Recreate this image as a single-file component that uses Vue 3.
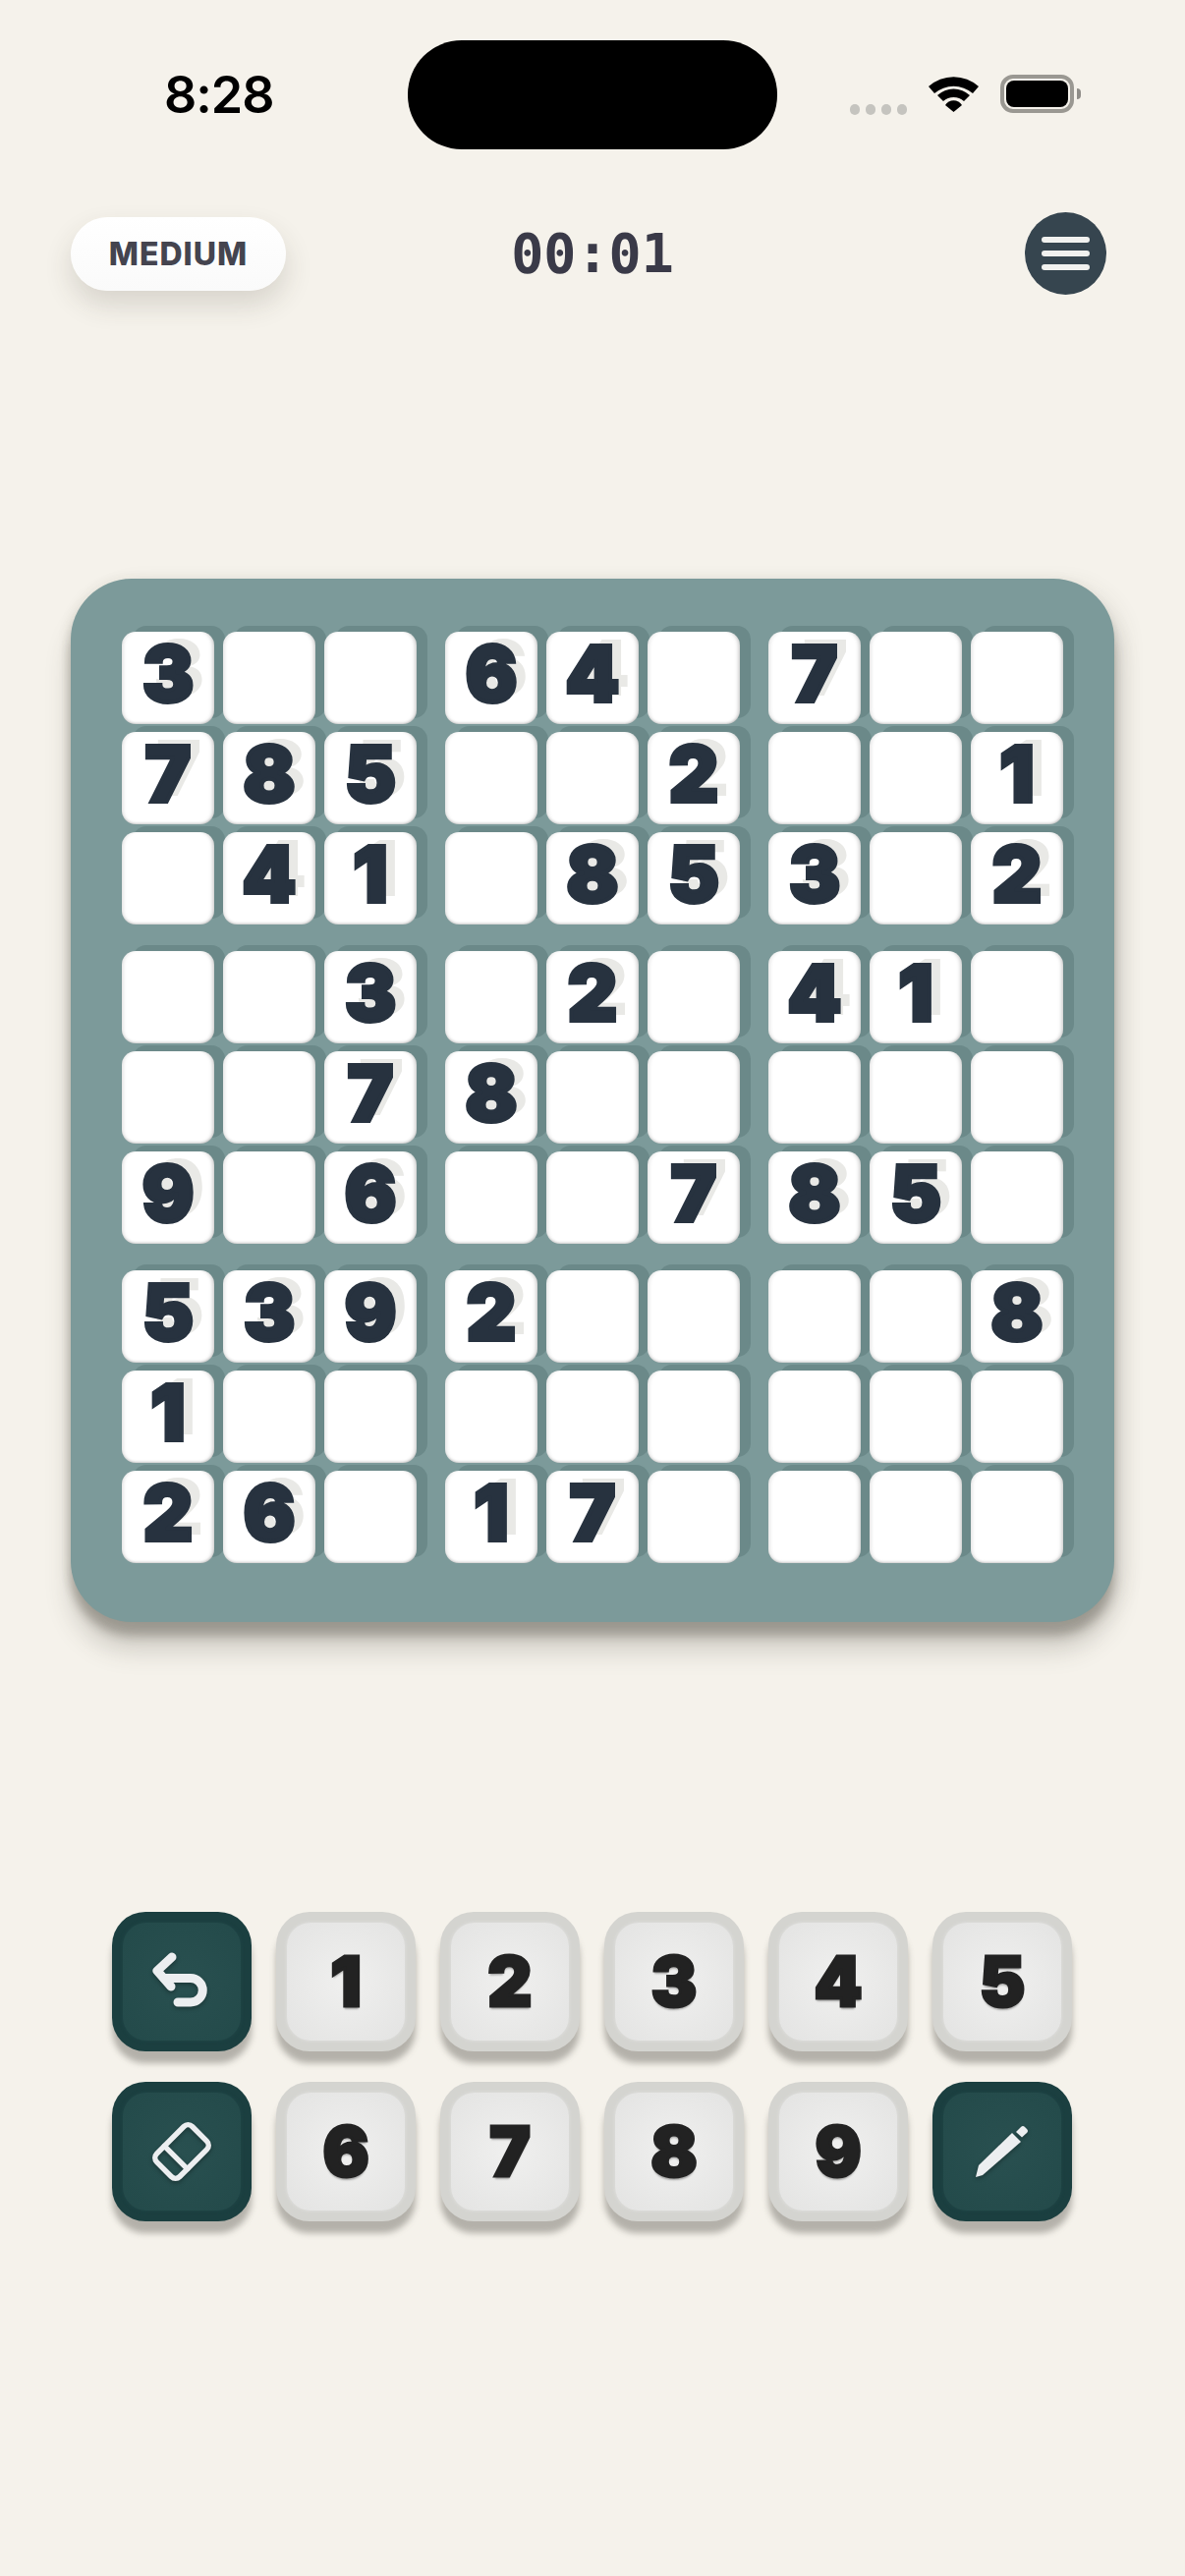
<script setup>
const board = [
  '3..64.7..', '785..2..1', '.41.853.2',
  '..3.2.41.', '..78.....', '9.6..785.',
  '5392....8', '1........', '26.17....'
]
const boxes = [0, 3, 6].flatMap(r => [0, 3, 6].map(c => {
  const cells = []
  for (let i = r; i < r + 3; i++) for (let j = c; j < c + 3; j++) cells.push(board[i][j] === '.' ? '' : board[i][j])
  return cells
}))
const row1 = ['1', '2', '3', '4', '5']
const row2 = ['6', '7', '8', '9']
</script>

<template>
  <div class="screen">
    <div class="status">
      <span class="clock">8:28</span>
      <div class="island"></div>
      <div class="indicators">
        <div class="dots"><i></i><i></i><i></i><i></i></div>
        <svg class="wifi" width="51" height="38" viewBox="0 0 51 38" fill="#000">
          <path d="M0 12 A38 38 0 0 1 51 12 L45 19 A30 30 0 0 0 6 19Z"/>
          <path d="M9 21 A24 24 0 0 1 42 21 L36 27 A16 16 0 0 0 15 27Z"/>
          <path d="M17 31 A10 10 0 0 1 34 31 L25.5 38Z"/>
        </svg>
        <div class="battery"><div class="charge"></div><div class="nub"></div></div>
      </div>
    </div>

    <header class="top">
      <div class="pill">MEDIUM</div>
      <div class="timer">00:01</div>
      <button class="menu"><i></i><i></i><i></i></button>
    </header>

    <section class="board">
      <div class="box" v-for="(box, b) in boxes" :key="b">
        <div class="cell" v-for="(v, i) in box" :key="i">{{ v }}</div>
      </div>
    </section>

    <section class="pad">
      <button class="key dark"><span class="face">
        <svg width="60" height="60" viewBox="0 0 60 60" fill="none" stroke="#eceef0" stroke-width="9" stroke-linecap="round" stroke-linejoin="round">
          <path d="M20 5 L5 19 L19 35"/>
          <path d="M12 26.5 H39 A12.25 12.25 0 0 1 39 51 H26"/>
        </svg>
      </span></button>
      <button class="key" v-for="n in row1" :key="n"><span class="face">{{ n }}</span></button>
      <button class="key dark"><span class="face">
        <svg width="66" height="66" viewBox="0 0 66 66" fill="none" stroke="#eceef0" stroke-width="5.5" stroke-linejoin="round" stroke-linecap="round">
          <g transform="rotate(-45 33 33)">
            <rect x="7.5" y="16.5" width="51" height="33" rx="6"/>
            <path d="M24.5 16.5 V49.5"/>
          </g>
        </svg>
      </span></button>
      <button class="key" v-for="n in row2" :key="n"><span class="face">{{ n }}</span></button>
      <button class="key dark"><span class="face">
        <svg width="54" height="54" viewBox="0 0 54 54" fill="#eceef0">
          <path d="M0 53 L3 41 L37 8 L46 17 L7 51 Z"/>
          <path d="M41 7 L46 2 Q48 0 50 2 L52 4 Q54 6 52 8 L47 12.5 Z"/>
        </svg>
      </span></button>
    </section>
  </div>
</template>

<style scoped>
.screen {
  width: 1206px;
  height: 2622px;
  background: #f5f2eb;
  overflow: hidden;
  display: flex;
  flex-direction: column;
  font-family: Inter, "Liberation Sans", sans-serif;
}
.status {
  height: 111px;
  margin-top: 41px;
  padding: 0 106px 0 167px;
  display: flex;
  align-items: center;
}
.clock {
  width: 248px;
  font-size: 52px;
  font-weight: 600;
  color: #000;
  line-height: 1;
  letter-spacing: -1px;
}
.island {
  width: 376px;
  height: 111px;
  border-radius: 55px;
  background: #000;
}
.indicators {
  margin-left: 74px;
  display: flex;
  align-items: center;
}
.dots { display: flex; gap: 6px; margin-top: 29px; }
.dots i { width: 10px; height: 11px; border-radius: 5px; background: #c5c4bf; }
.wifi { margin-left: 22px; margin-top: -3px; }
.battery {
  position: relative;
  margin-left: 22px;
  width: 75px;
  height: 39px;
  margin-top: -3px;
  box-sizing: border-box;
  border: 4px solid #9a9892;
  border-radius: 13px;
  padding: 2px;
}
.charge { width: 100%; height: 100%; background: #000; border-radius: 8px; }
.nub {
  position: absolute;
  right: -11px;
  top: 10px;
  width: 4px;
  height: 11px;
  border-radius: 0 5px 5px 0;
  background: #8f8d88;
}
.top {
  margin-top: 64px;
  padding: 0 72px;
  height: 84px;
  display: grid;
  grid-template-columns: 1fr auto 1fr;
  align-items: center;
}
.pill {
  width: 219px;
  height: 75px;
  border-radius: 38px;
  background: linear-gradient(#fff, #fafafa);
  color: #44444f;
  font-weight: 800;
  font-size: 32px;
  letter-spacing: 1px;
  display: flex;
  align-items: center;
  justify-content: center;
  box-shadow: 0 14px 28px rgba(60, 55, 45, 0.16);
}
.timer {
  font-family: "DejaVu Sans Mono", monospace;
  font-weight: 700;
  font-size: 55px;
  line-height: 1;
  color: #3a3a48;
}
.menu {
  justify-self: end;
  margin-right: 8px;
  width: 83px;
  height: 84px;
  padding: 0;
  border: 0;
  border-radius: 50%;
  background: #36454f;
  display: flex;
  flex-direction: column;
  align-items: center;
  justify-content: center;
  gap: 8px;
}
.menu i { width: 49px; height: 6px; border-radius: 3px; background: #f1f1ef; }
.board {
  margin-top: 289px;
  margin-left: 72px;
  width: 1062px;
  height: 1062px;
  box-sizing: border-box;
  padding: 54px 52px 60px;
  border-radius: 62px;
  background: #7c9a9a;
  box-shadow: 0 14px 10px rgba(70, 65, 55, 0.3), 0 28px 26px rgba(70, 65, 55, 0.22), 10px 6px 22px rgba(70, 65, 55, 0.1), -4px 0 12px rgba(70, 65, 55, 0.06);
  display: grid;
  grid-template-columns: repeat(3, 300px);
  grid-template-rows: repeat(3, 298px);
  gap: 27px 29px;
}
.box {
  display: grid;
  grid-template-columns: repeat(3, 94px);
  grid-template-rows: repeat(3, 94px);
  gap: 8px 9px;
}
.cell {
  border-radius: 14px;
  background: #fff;
  color: #27323f;
  font-size: 78px;
  font-weight: 900;
  line-height: 1;
  -webkit-text-stroke: 4px #27323f;
  display: flex;
  align-items: center;
  justify-content: center;
  text-shadow: 11px -6px 0 #e9e9e6;
  box-shadow: 11px -6px 0 #6b8989, inset 4px 0 4px -3px rgba(0, 0, 0, 0.14), inset -4px 0 4px -3px rgba(0, 0, 0, 0.26), inset 0 -4px 3px -3px rgba(0, 0, 0, 0.2);
  padding-bottom: 8px;
  box-sizing: border-box;
}
.pad {
  margin-top: 295px;
  margin-left: 114px;
  display: grid;
  grid-template-columns: repeat(6, 142px);
  grid-template-rows: repeat(2, 142px);
  gap: 31px 25px;
}
.key {
  padding: 11px;
  border: 0;
  border-radius: 34px;
  background: #d4d4d0;
  box-shadow: 0 12px 6px rgba(90, 88, 80, 0.42);
  display: block;
}
.face {
  display: flex;
  width: 100%;
  height: 100%;
  border-radius: 24px;
  align-items: center;
  justify-content: center;
  background: radial-gradient(circle at 50% 50%, #f0f0ef 0%, #e3e3e2 100%);
  box-shadow: 0 0 3px 1px #dcdcda;
  font-family: Inter, "Liberation Sans", sans-serif;
  font-size: 70px;
  font-weight: 900;
  color: #222;
  -webkit-text-stroke: 3px #222;
  text-shadow: 0 3px 2px rgba(0, 0, 0, 0.3);
  padding-bottom: 2px;
  box-sizing: border-box;
}
.dark { background: #1b3f40; }
.dark .face {
  background: radial-gradient(circle at 50% 50%, #295050 0%, #234a4a 100%);
  box-shadow: 0 0 3px 1px #1f4445;
  padding-bottom: 0;
}
.dark svg { filter: drop-shadow(0 2px 2px rgba(0, 0, 0, 0.3)); }
</style>
